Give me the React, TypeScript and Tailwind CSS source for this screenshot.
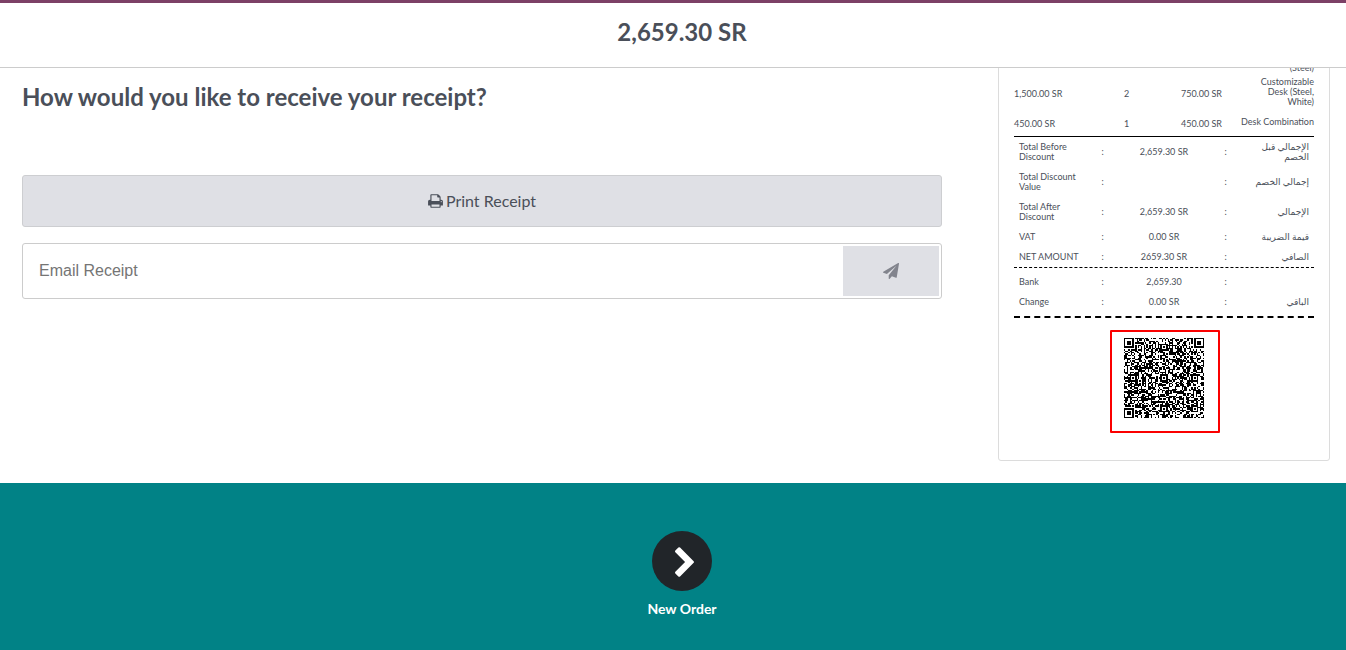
import { useState } from "react";

interface OrderLine {
  total: string;
  qty: string;
  price: string;
  name: string;
}

interface SummaryLine {
  label: string;
  value: string;
  arabic: string;
}

const orderLines: OrderLine[] = [
  { total: "1,500.00 SR", qty: "2", price: "750.00 SR", name: "Customizable Desk (Steel, White)" },
  { total: "450.00 SR", qty: "1", price: "450.00 SR", name: "Desk Combination" },
];

const totals: SummaryLine[] = [
  { label: "Total Before Discount", value: "2,659.30 SR", arabic: "الإجمالي قبل الخصم" },
  { label: "Total Discount Value", value: "", arabic: "إجمالي الخصم" },
  { label: "Total After Discount", value: "2,659.30 SR", arabic: "الإجمالي" },
  { label: "VAT", value: "0.00 SR", arabic: "قيمة الضريبة" },
  { label: "NET AMOUNT", value: "2659.30 SR", arabic: "الصافي" },
];

const payments: SummaryLine[] = [
  { label: "Bank", value: "2,659.30", arabic: "" },
  { label: "Change", value: "0.00 SR", arabic: "الباقي" },
];

const QR_SIZE = 57;

// finder, alignment and timing patterns, with seeded modules for the rest
function buildQrPath() {
  const last = QR_SIZE - 7;
  const finders = [[0, 0], [last, 0], [0, last]];
  const aligns = [[28, 6], [6, 28], [28, 28], [50, 28], [28, 50], [50, 50]];
  let seed = 20731;
  let path = "";
  for (let y = 0; y < QR_SIZE; y++) {
    for (let x = 0; x < QR_SIZE; x++) {
      seed = (seed * 1103515245 + 12345) % 2147483648;
      let dark = seed / 2147483648 < 0.53;
      if (x === 6 || y === 6) dark = (x + y) % 2 === 0;
      for (const [ax, ay] of aligns) {
        const d = Math.max(Math.abs(x - ax), Math.abs(y - ay));
        if (d <= 2) dark = d !== 1;
      }
      for (const [fx, fy] of finders) {
        const d = Math.max(Math.abs(x - fx - 3), Math.abs(y - fy - 3));
        if (d <= 4) dark = d !== 2 && d !== 4;
      }
      if (dark) path += `M${x} ${y}h1v1h-1z`;
    }
  }
  return path;
}

const qrPath = buildQrPath();

function PrintIcon() {
  return (
    <svg viewBox="0 0 1664 1792" className="h-4 w-[15px]" fill="currentColor" aria-hidden="true">
      <path d="M384 1536h896v-256h-896v256zm0-640h896v-384h-160q-40 0-68-28t-28-68v-160h-640v640zm1152 64q0-26-19-45t-45-19-45 19-19 45 19 45 45 19 45-19 19-45zm128 0v416q0 13-9.5 22.5t-22.5 9.5h-224v160q0 40-28 68t-68 28h-960q-40 0-68-28t-28-68v-160h-224q-13 0-22.5-9.5t-9.5-22.5v-416q0-79 56.5-135.5t135.5-56.5h64v-544q0-40 28-68t68-28h672q40 0 88 20t76 48l152 152q28 28 48 76t20 88v256h64q79 0 135.5 56.5t56.5 135.5z" />
    </svg>
  );
}

function PaperPlaneIcon() {
  return (
    <svg viewBox="0 0 1792 1792" className="h-4 w-4" fill="currentColor" aria-hidden="true">
      <path d="M1764 11q33 24 27 64l-256 1536q-5 29-32 45-14 8-31 8-11 0-24-5l-453-185-242 295q-18 23-49 23-13 0-22-4-19-7-30.5-23.5t-11.5-36.5v-349l864-1059-1069 925-395-162q-37-14-40-55-2-40 32-59l1664-960q15-9 32-9 20 0 36 11z" />
    </svg>
  );
}

function ChevronIcon() {
  return (
    <svg viewBox="346 26 1036 1612" className="h-[30px] w-[19px]" fill="currentColor" aria-hidden="true">
      <path d="M1363 877l-742 742q-19 19-45 19t-45-19l-166-166q-19-19-19-45t19-45l531-531-531-531q-19-19-19-45t19-45l166-166q19-19 45-19t45 19l742 742q19 19 19 45t-19 45z" />
    </svg>
  );
}

function SummaryTable({ lines }: { lines: SummaryLine[] }) {
  return (
    <table className="w-full table-fixed">
      <colgroup>
        <col className="w-[80px]" />
        <col className="w-[17px]" />
        <col />
        <col className="w-[17px]" />
        <col className="w-[80px]" />
      </colgroup>
      <tbody>
        {lines.map((line) => (
          <tr key={line.label}>
            <th scope="row" className="p-[5px] text-left font-normal">
              {line.label}
            </th>
            <td className="text-center">:</td>
            <td className="text-center">{line.value}</td>
            <td className="text-center">:</td>
            <td className="p-[5px] text-right" dir="rtl">
              {line.arabic}
            </td>
          </tr>
        ))}
      </tbody>
    </table>
  );
}

function Receipt() {
  return (
    <div className="rounded-[3px] border border-[#dcdcdc] bg-white px-[15px] pt-4 pb-[27px] text-[9px] leading-[10px]">
      <table className="w-full table-fixed">
        <colgroup>
          <col className="w-[75px]" />
          <col className="w-[75px]" />
          <col className="w-[58px]" />
          <col />
        </colgroup>
        <tbody>
          <tr>
            <td />
            <td />
            <td />
            <td className="text-right">(Steel)</td>
          </tr>
          {orderLines.map((line) => (
            <tr key={line.name}>
              <td className="pt-1.5 pb-1">{line.total}</td>
              <td className="pt-1.5 pb-1 text-center">{line.qty}</td>
              <td className="pt-1.5 pb-1 text-right">{line.price}</td>
              <td className="pt-1 pb-1.5 pl-[18px] text-right">{line.name}</td>
            </tr>
          ))}
        </tbody>
      </table>
      <div className="mt-[3px] border-t border-black">
        <SummaryTable lines={totals} />
      </div>
      <div className="border-t border-dashed border-black pt-1">
        <SummaryTable lines={payments} />
      </div>
      <div className="mt-1 border-t-2 border-dashed border-black" />
      <div className="mt-3 ml-24 h-[103px] w-[110px] rounded-[1px] border-2 border-[#fb0000] pt-1.5 pl-3">
        <svg
          viewBox="0 0 57 57"
          className="h-20 w-20"
          shapeRendering="crispEdges"
          role="img"
          aria-label="Receipt QR code"
        >
          <path d={qrPath} fill="#000" />
        </svg>
      </div>
    </div>
  );
}

export default function App() {
  const [email, setEmail] = useState("");

  return (
    <div className="flex h-screen flex-col bg-white font-[Lato,'DejaVu_Sans',sans-serif] text-[#4a4f59]">
      <header className="border-t-[3px] border-b border-t-[#7c4066] border-b-[#cccccc] pt-[13px] pb-[19px] pl-[18px] text-center">
        <h1 className="text-[24px] leading-8 font-bold">2,659.30 SR</h1>
      </header>

      <main className="flex min-h-0 flex-1 gap-14 overflow-hidden pr-4 pl-[22px]">
        <section className="min-w-0 flex-1 pt-[13px]">
          <h2 className="text-[24px] leading-8 font-bold">
            How would you like to receive your receipt?
          </h2>
          <button
            type="button"
            className="mt-[62px] flex h-[52px] w-full items-center justify-center gap-[3px] rounded-[3px] border border-[#cdced1] bg-[#dfe0e5] text-[16px]"
          >
            <PrintIcon />
            Print Receipt
          </button>
          <form
            className="mt-4 flex h-14 rounded-[3px] border border-[#cccccc] p-0.5"
            onSubmit={(e) => e.preventDefault()}
          >
            <input
              type="email"
              aria-label="Email Receipt"
              placeholder="Email Receipt"
              value={email}
              onChange={(e) => setEmail(e.target.value)}
              className="min-w-0 flex-1 px-3.5 font-['Liberation_Sans',sans-serif] text-[16px] outline-none placeholder:text-[#757575]"
            />
            <button
              type="submit"
              aria-label="Send"
              className="flex w-24 items-center justify-center bg-[#dfe0e5] text-[#82848d]"
            >
              <PaperPlaneIcon />
            </button>
          </form>
        </section>

        <aside className="flex w-[332px] flex-col justify-end pb-[22px]">
          <Receipt />
        </aside>
      </main>

      <footer className="flex justify-center bg-[#018286] pt-12 pb-8 pl-[18px]">
        <button type="button" className="flex flex-col items-center gap-2 text-white">
          <span className="flex h-[60px] w-[60px] items-center justify-center rounded-full bg-[#212529] pt-0.5 pl-1.5">
            <ChevronIcon />
          </span>
          <span className="text-[14px] leading-[19px] font-bold">New Order</span>
        </button>
      </footer>
    </div>
  );
}
